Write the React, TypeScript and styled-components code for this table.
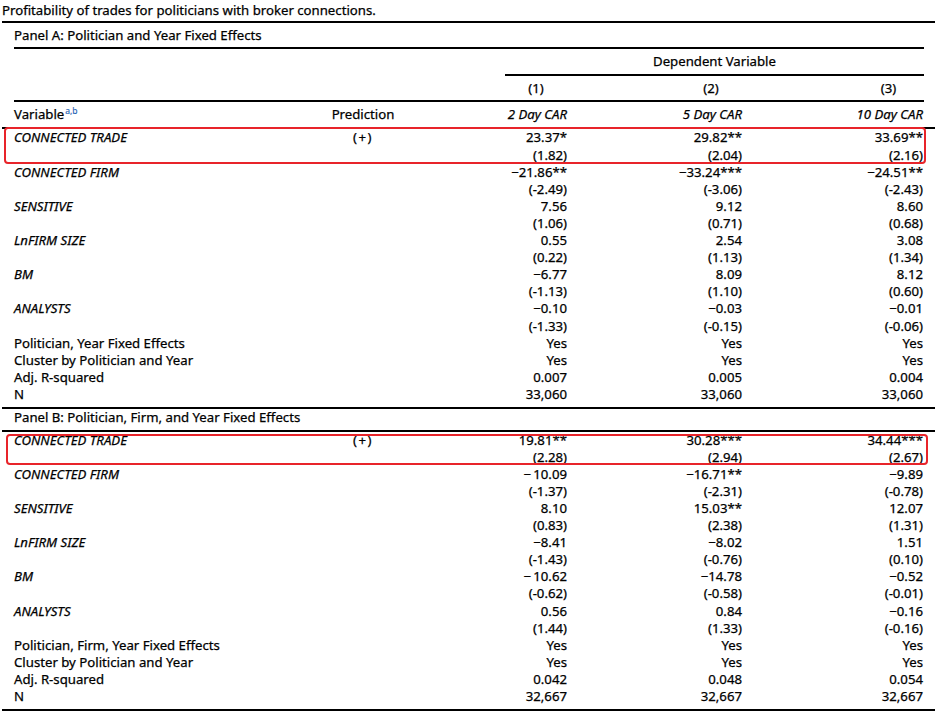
import styled, { createGlobalStyle } from "styled-components"

const MINUS = "\u2212"

interface Variable {
  label: string
  italic?: boolean
  pred?: string
  values: string[]
  tstats?: string[]
  box?: [number, number, number, number]
}

const panelA: Variable[] = [
  {
    label: "CONNECTED TRADE",
    italic: true,
    pred: "(+)",
    values: ["23.37*", "29.82**", "33.69**"],
    tstats: ["(1.82)", "(2.04)", "(2.16)"],
    box: [-2, -2, 0, -10]
  },
  {
    label: "CONNECTED FIRM",
    italic: true,
    values: [`${MINUS}21.86**`, `${MINUS}33.24***`, `${MINUS}24.51**`],
    tstats: ["(-2.49)", "(-3.06)", "(-2.43)"]
  },
  {
    label: "SENSITIVE",
    italic: true,
    values: ["7.56", "9.12", "8.60"],
    tstats: ["(1.06)", "(0.71)", "(0.68)"]
  },
  {
    label: "LnFIRM SIZE",
    italic: true,
    values: ["0.55", "2.54", "3.08"],
    tstats: ["(0.22)", "(1.13)", "(1.34)"]
  },
  {
    label: "BM",
    italic: true,
    values: [`${MINUS}6.77`, "8.09", "8.12"],
    tstats: ["(-1.13)", "(1.10)", "(0.60)"]
  },
  {
    label: "ANALYSTS",
    italic: true,
    values: [`${MINUS}0.10`, `${MINUS}0.03`, `${MINUS}0.01`],
    tstats: ["(-1.33)", "(-0.15)", "(-0.06)"]
  },
  { label: "Politician, Year Fixed Effects", values: ["Yes", "Yes", "Yes"] },
  { label: "Cluster by Politician and Year", values: ["Yes", "Yes", "Yes"] },
  { label: "Adj. R-squared", values: ["0.007", "0.005", "0.004"] },
  { label: "N", values: ["33,060", "33,060", "33,060"] }
]

const panelB: Variable[] = [
  {
    label: "CONNECTED TRADE",
    italic: true,
    pred: "(+)",
    values: ["19.81**", "30.28***", "34.44***"],
    tstats: ["(2.28)", "(2.94)", "(2.67)"],
    box: [2, -4, 1, -8]
  },
  {
    label: "CONNECTED FIRM",
    italic: true,
    values: [`${MINUS}\u200910.09`, `${MINUS}16.71**`, `${MINUS}9.89`],
    tstats: ["(-1.37)", "(-2.31)", "(-0.78)"]
  },
  {
    label: "SENSITIVE",
    italic: true,
    values: ["8.10", "15.03**", "12.07"],
    tstats: ["(0.83)", "(2.38)", "(1.31)"]
  },
  {
    label: "LnFIRM SIZE",
    italic: true,
    values: [`${MINUS}8.41`, `${MINUS}8.02`, "1.51"],
    tstats: ["(-1.43)", "(-0.76)", "(0.10)"]
  },
  {
    label: "BM",
    italic: true,
    values: [`${MINUS}\u200910.62`, `${MINUS}14.78`, `${MINUS}0.52`],
    tstats: ["(-0.62)", "(-0.58)", "(-0.01)"]
  },
  {
    label: "ANALYSTS",
    italic: true,
    values: ["0.56", "0.84", `${MINUS}0.16`],
    tstats: ["(1.44)", "(1.33)", "(-0.16)"]
  },
  { label: "Politician, Firm, Year Fixed Effects", values: ["Yes", "Yes", "Yes"] },
  { label: "Cluster by Politician and Year", values: ["Yes", "Yes", "Yes"] },
  { label: "Adj. R-squared", values: ["0.042", "0.048", "0.054"] },
  { label: "N", values: ["32,667", "32,667", "32,667"] }
]

const columns = [
  { num: "(1)", title: "2 Day CAR", width: 62 },
  { num: "(2)", title: "5 Day CAR", width: 62 },
  { num: "(3)", title: "10 Day CAR", width: 69 }
]

const GlobalStyle = createGlobalStyle`
  body {
    margin: 0;
    background: #fff;
    color: #000;
    font-family: "Noto Sans", "DejaVu Sans", sans-serif;
    font-size: 13.2px;
    -webkit-text-stroke: 0.25px #000;
  }
`

const Page = styled.div`
  width: 933px;
  padding-left: 2px;
  line-height: 17.1px;
`

const Caption = styled.div`
  padding: 2px 0;
`

const Rule = styled.div<{ $inset?: boolean }>`
  height: 2px;
  background: #000;
  margin: ${({ $inset }) => ($inset ? "0 11px 0 12px" : "0")};
`

const PanelLabel = styled.div<{ $pad: string }>`
  padding: ${({ $pad }) => $pad};
  padding-left: 12px;
`

const Inset = styled.div<{ $bottom?: number }>`
  margin: 0 11px 0 12px;
  padding-bottom: ${({ $bottom }) => $bottom ?? 0}px;
`

const Row = styled.div<{ $pad?: string }>`
  display: grid;
  grid-template-columns: 286px 126px 141px 175px 181px;
  padding: ${({ $pad }) => $pad ?? "0"};
  white-space: nowrap;
`

const VarCell = styled.div<{ $italic?: boolean }>`
  font-style: ${({ $italic }) => ($italic ? "italic" : "normal")};
`

const PredCell = styled.div`
  text-align: center;
  letter-spacing: 1.5px;
`

const NumCell = styled.div<{ $italic?: boolean }>`
  text-align: right;
  font-style: ${({ $italic }) => ($italic ? "italic" : "normal")};
`

const ColNum = styled.span<{ $w: number }>`
  display: inline-block;
  width: ${({ $w }) => $w}px;
  text-align: center;
`

const DepCell = styled.div`
  grid-column: 3 / 6;
  margin: 0 -1px 0 79px;
  padding: 4px 0;
  text-align: center;
  border-bottom: 2px solid #000;
`

const Heading = styled.span`
  letter-spacing: 0;
`

const Sup = styled.sup`
  font-size: 8.5px;
  line-height: 0;
  color: #1f64b4;
  -webkit-text-stroke: 0.15px #1f64b4;
  vertical-align: 5px;
  margin-left: 1px;
`

const Group = styled.div<{ $box?: [number, number, number, number] }>`
  position: relative;

  &::after {
    display: ${({ $box }) => ($box ? "block" : "none")};
    content: "";
    position: absolute;
    top: ${({ $box }) => ($box ? $box[0] : 0)}px;
    right: ${({ $box }) => ($box ? $box[1] : 0)}px;
    bottom: ${({ $box }) => ($box ? $box[2] : 0)}px;
    left: ${({ $box }) => ($box ? $box[3] : 0)}px;
    border: 2px solid #e8242a;
    border-radius: 4px;
    pointer-events: none;
  }
`

const VariableRows = ({ v }: { v: Variable }) => (
  <Group $box={v.box}>
    <Row>
      <VarCell $italic={v.italic}>{v.label}</VarCell>
      <PredCell>{v.pred}</PredCell>
      {v.values.map((val, i) => (
        <NumCell key={i}>{val}</NumCell>
      ))}
    </Row>
    {v.tstats && (
      <Row>
        <VarCell />
        <PredCell />
        {v.tstats.map((t, i) => (
          <NumCell key={i}>{t}</NumCell>
        ))}
      </Row>
    )}
  </Group>
)

const App = () => {
  return (
    <Page>
      <GlobalStyle />
      <Caption>Profitability of trades for politicians with broker connections.</Caption>
      <Rule />
      <PanelLabel $pad="4px 0 3px">Panel A: Politician and Year Fixed Effects</PanelLabel>
      <Rule $inset />
      <Inset>
        <Row>
          <DepCell>Dependent Variable</DepCell>
        </Row>
        <Row $pad="3.5px 0">
          <VarCell />
          <PredCell />
          {columns.map((c) => (
            <NumCell key={c.num}>
              <ColNum $w={c.width}>{c.num}</ColNum>
            </NumCell>
          ))}
        </Row>
      </Inset>
      <Rule $inset />
      <Inset>
        <Row $pad="4px 0">
          <VarCell>
            Variable<Sup>a,b</Sup>
          </VarCell>
          <PredCell>
            <Heading>Prediction</Heading>
          </PredCell>
          {columns.map((c) => (
            <NumCell key={c.title} $italic>
              {c.title}
            </NumCell>
          ))}
        </Row>
      </Inset>
      <Rule />
      <Inset $bottom={4.5}>
        {panelA.map((v) => (
          <VariableRows key={v.label} v={v} />
        ))}
      </Inset>
      <Rule />
      <PanelLabel $pad="0 0 3px">Panel B: Politician, Firm, and Year Fixed Effects</PanelLabel>
      <Rule />
      <Inset $bottom={4}>
        {panelB.map((v) => (
          <VariableRows key={v.label} v={v} />
        ))}
      </Inset>
      <Rule />
    </Page>
  )
}

export default App
